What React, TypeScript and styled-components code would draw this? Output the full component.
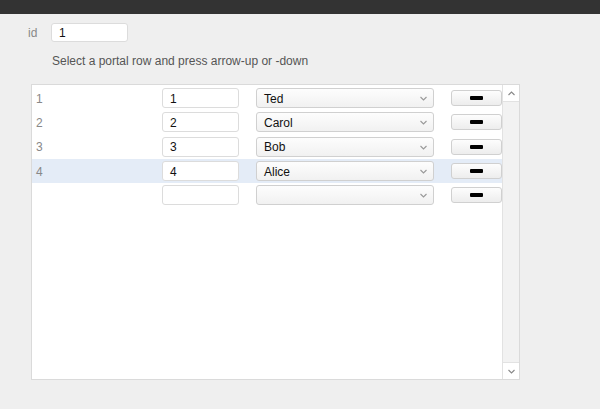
import React from "react";
import styled, { createGlobalStyle } from "styled-components";

const Global = createGlobalStyle`
  html, body { margin: 0; padding: 0; background: #efefef; }
  body { font-family: "Liberation Sans", Arial, sans-serif; font-size: 12px; color: #333; }
`;

const Page = styled.div`
  width: 600px;
  height: 409px;
  background: #efefef;
  overflow: hidden;
`;

const TopBar = styled.div`
  height: 14px;
  background: #333333;
`;

const Content = styled.div`
  padding: 8px 0 0 28px;
`;

const IdRow = styled.div`
  display: flex;
  align-items: center;
  height: 19px;
  gap: 12px;
  padding-top: 1px;
`;

const Label = styled.span`
  color: #888;
  font-size: 12px;
  width: 11px;
`;

const TextInput = styled.div<{ $w: number; $h?: number }>`
  box-sizing: border-box;
  width: ${p => p.$w}px;
  height: ${p => (p.$h ? p.$h : 20)}px;
  background: #fff;
  border: 1px solid #dcdcdc;
  border-radius: 3px;
  padding: 1px 0 0 7px;
  display: flex;
  align-items: center;
  font-size: 12px;
  color: #111;
`;

const Hint = styled.div`
  margin: 12px 0 0 24px;
  color: #555;
  font-size: 12px;
  height: 14px;
  line-height: 14px;
`;

const Portal = styled.div`
  box-sizing: border-box;
  margin: 16px 0 0 3px;
  width: 489px;
  height: 296px;
  background: #fff;
  border: 1px solid #dadada;
  display: flex;
`;

const Rows = styled.div`
  flex: 1;
  padding-top: 1px;
`;

const Row = styled.div<{ $sel?: boolean }>`
  height: 24.33px;
  display: grid;
  grid-template-columns: 130px 77px 17px 178px 17px 51px;
  align-items: center;
  background: ${p => (p.$sel ? "#e4ecf7" : "transparent")};
`;

const RowNum = styled.span`
  padding-left: 4px;
  padding-top: 1px;
  color: #888;
  font-size: 12px;
`;

const Select = styled.div`
  box-sizing: border-box;
  height: 20px;
  grid-column: 4;
  border: 1px solid #d0d0d0;
  border-radius: 3px;
  background: linear-gradient(#fdfdfd, #f1f1f1);
  display: flex;
  align-items: center;
  justify-content: space-between;
  padding: 1px 6px 0 7px;
  font-size: 12px;
  color: #111;
`;

const MinusButton = styled.div`
  box-sizing: border-box;
  grid-column: 6;
  height: 16px;
  border: 1px solid #d0d0d0;
  border-radius: 3px;
  background: linear-gradient(#fdfdfd, #ededed);
  display: flex;
  align-items: center;
  justify-content: center;
`;

const MinusBar = styled.span`
  width: 13px;
  height: 4px;
  border-radius: 1px;
  background: #000;
`;

const Scrollbar = styled.div`
  width: 17px;
  border-left: 1px solid #e2e2e2;
  background: #f2f2f2;
  display: flex;
  flex-direction: column;
  justify-content: space-between;
`;

const ScrollBtn = styled.div`
  height: 16px;
  background: #fff;
  border-bottom: 1px solid #e2e2e2;
  display: flex;
  align-items: center;
  justify-content: center;
  &:last-child {
    border-bottom: none;
    border-top: 1px solid #e2e2e2;
  }
`;

const Chevron = ({ up, color = "#888" }: { up?: boolean; color?: string }) => (
  <svg width="7" height="5" viewBox="0 0 7 5">
    <path
      d={up ? "M0.5 4 L3.5 1 L6.5 4" : "M0.5 1 L3.5 4 L6.5 1"}
      fill="none"
      stroke={color}
      strokeWidth="1.1"
    />
  </svg>
);

const data = [
  { n: "1", v: "1", name: "Ted" },
  { n: "2", v: "2", name: "Carol" },
  { n: "3", v: "3", name: "Bob" },
  { n: "4", v: "4", name: "Alice", sel: true },
  { n: "", v: "", name: "" },
];

export default function App() {
  return (
    <Page>
      <Global />
      <TopBar />
      <Content>
        <IdRow>
          <Label>id</Label>
          <TextInput $w={77} $h={19}>1</TextInput>
        </IdRow>
        <Hint>Select a portal row and press arrow-up or -down</Hint>
        <Portal>
          <Rows>
            {data.map((r, i) => (
              <Row key={i} $sel={r.sel}>
                <RowNum>{r.n}</RowNum>
                <TextInput $w={77}>{r.v}</TextInput>
                <Select>
                  <span>{r.name}</span>
                  <Chevron color="#999" />
                </Select>
                <MinusButton>
                  <MinusBar />
                </MinusButton>
              </Row>
            ))}
          </Rows>
          <Scrollbar>
            <ScrollBtn><Chevron up /></ScrollBtn>
            <ScrollBtn><Chevron /></ScrollBtn>
          </Scrollbar>
        </Portal>
      </Content>
    </Page>
  );
}
